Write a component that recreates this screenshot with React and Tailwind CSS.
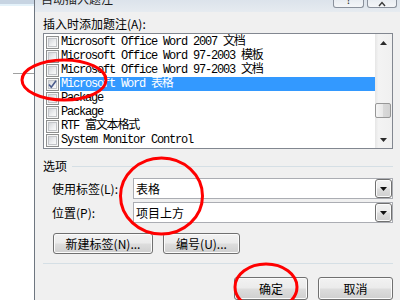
import React from 'react'

const items = [
  { label: 'Microsoft Office Word 2007 文档' },
  { label: 'Microsoft Office Word 97-2003 模板' },
  { label: 'Microsoft Office Word 97-2003 文档' },
  { label: 'Microsoft Word 表格', checked: true, selected: true },
  { label: 'Package' },
  { label: 'Package' },
  { label: 'RTF 富文本格式' },
  { label: 'System Monitor Control' },
]

const btn =
  'flex items-center justify-center rounded-[3px] border border-[#707070] bg-[linear-gradient(#f2f2f2_0%,#ebebeb_48%,#dddddd_52%,#cfcfcf_100%)] shadow-[inset_0_0_0_1px_#fbfbfb] text-[12px] leading-[14px] text-black'

function CheckBox({ checked }) {
  return (
    <div className="relative w-[13px] h-[13px] shrink-0 border border-[#8e8f8f] bg-[#f6f6f6] p-[1px]">
      <div className="w-full h-full border border-[#c3c5c9] bg-[linear-gradient(135deg,#d3d5d9,#eeeff1_60%,#fafafa)]" />
      {checked && (
        <svg className="absolute inset-0" width="11" height="11" viewBox="0 0 11 11">
          <polyline points="2,5.5 4.3,8.3 9,1.8" fill="none" stroke="#4b5b8c" strokeWidth="1.6" />
        </svg>
      )}
    </div>
  )
}

function Arrow({ up }) {
  return (
    <svg width="7" height="4" viewBox="0 0 7 4">
      <polygon points={up ? '3.5,0 7,4 0,4' : '0,0 7,0 3.5,4'} fill="#2b2b2b" />
    </svg>
  )
}

function Combo({ value }) {
  return (
    <div className="flex-1 h-[21px] flex border border-[#abadb3] bg-white">
      <div className="flex-1 pl-[2px] flex items-center text-[12px] leading-[14px] text-black">{value}</div>
      <div className={`w-[17px] h-full rounded-[2px] ${btn}`}>
        <svg width="7" height="4" viewBox="0 0 7 4">
          <polygon points="0,0 7,0 3.5,4" fill="#111" />
        </svg>
      </div>
    </div>
  )
}

export default function App() {
  return (
    <div className="relative w-[400px] h-[300px] overflow-hidden bg-white flex font-['Noto_Sans_CJK_SC','Liberation_Sans',sans-serif]">
      {/* window behind the dialog */}
      <div className="w-[34px] shrink-0 flex flex-col">
        <div className="h-[4px] bg-[#c7d4e2]" />
        <div className="h-[2px] bg-[#e4f2fa]" />
        <div className="h-[67px]" />
        <div className="h-px ml-[13px] bg-[#a0a0a0]" />
      </div>

      {/* dialog */}
      <div className="flex-1 flex flex-col border-l border-[#6e7680] bg-[#f0f0f0]">
        <div className="h-[12px] shrink-0 flex bg-[linear-gradient(#dce3eb,#e6ebf0)] overflow-hidden">
          <div className="flex-1 pl-[6px] -mt-[8px] text-[12px] leading-[14px] text-[#1e1e1e]">自动插入题注</div>
          <div className="flex gap-[3px] pr-[3px] h-[8px]">
            <div className="w-[31px] h-[8px] border border-t-0 border-[#8a919c] rounded-b-[3px] bg-[linear-gradient(#e9edf2,#f4f6f8)] flex justify-center overflow-hidden">
              <span className="-mt-[7px] text-[11px] leading-[12px] text-[#333]">?</span>
            </div>
            <div className="w-[30px] h-[8px] border border-t-0 border-[#8a919c] rounded-b-[3px] bg-[linear-gradient(#e9edf2,#f4f6f8)] flex justify-center">
              <svg width="12" height="7" viewBox="0 0 12 7">
                <path d="M3 6 L6 2.5 L9 6" fill="none" stroke="#3a3a3a" strokeWidth="1.4" />
              </svg>
            </div>
          </div>
        </div>

        <div className="flex-1 flex flex-col pl-[8px] pr-[7px] pt-[5px] text-black">
          <div className="h-[14px] text-[12px] leading-[14px]">插入时添加题注(A):</div>

          <div className="mt-[2px] h-[116px] flex border border-[#828790] bg-white">
            <div className="flex-1 pt-[1px] flex flex-col font-['Liberation_Mono','Noto_Sans_CJK_SC',monospace] text-[12px] tracking-[-1.2px]">
              {items.map((it, i) => (
                <div key={i} className="h-[14px] flex items-center pl-[2px]">
                  <CheckBox checked={it.checked} />
                  <div
                    className={`ml-[1px] flex-1 h-[14px] pl-[1px] leading-[14px] whitespace-nowrap ${
                      it.selected ? 'bg-[#3399ff] text-white' : 'text-black'
                    }`}
                  >
                    {it.label}
                  </div>
                </div>
              ))}
            </div>
            <div className="w-[17px] flex flex-col bg-[linear-gradient(90deg,#e6e6e6,#f3f3f3_20%,#f0f0f0)]">
              <div className="h-[17px] flex items-center justify-center">
                <Arrow up />
              </div>
              <div className="flex-1">
                <div className="mt-[52px] mr-[1px] h-[15px] rounded-[2px] border border-[#979797] bg-[linear-gradient(90deg,#f5f5f5,#e8e8e8_50%,#d9d9d9_50%,#d2d2d2)]" />
              </div>
              <div className="h-[17px] flex items-center justify-center">
                <Arrow />
              </div>
            </div>
          </div>

          <div className="mt-[10px] h-[14px] flex items-center">
            <span className="text-[12px] leading-[14px]">选项</span>
            <div className="ml-[5px] flex-1 h-px bg-[#d5dfe5]" />
          </div>

          <div className="mt-[5px] flex items-center">
            <span className="w-[81px] ml-[9px] text-[12px] leading-[14px]">使用标签(L):</span>
            <Combo value="表格" />
          </div>
          <div className="mt-[3px] flex items-center">
            <span className="w-[81px] ml-[9px] text-[12px] leading-[14px]">位置(P):</span>
            <Combo value="项目上方" />
          </div>

          <div className="mt-[10px] ml-[10px] flex gap-[10px]">
            <div className={`w-[100px] h-[21px] ${btn}`}>新建标签(N)...</div>
            <div className={`w-[77px] h-[21px] ${btn}`}>编号(U)...</div>
          </div>

          <div className="mt-[9px] h-px bg-[#d5dfe5]" />

          <div className="mt-[13px] flex justify-end gap-[10px]">
            <div className={`w-[74px] h-[23px] ${btn}`}>确定</div>
            <div className={`w-[75px] h-[23px] ${btn}`}>取消</div>
          </div>
        </div>
      </div>

      {/* red annotation circles */}
      <svg className="absolute inset-0 pointer-events-none" width="400" height="300" viewBox="0 0 400 300">
        <ellipse cx="64" cy="80" rx="42" ry="20" fill="none" stroke="#ff0000" strokeWidth="3" />
        <ellipse cx="161.5" cy="196" rx="41" ry="38" fill="none" stroke="#ff0000" strokeWidth="3" />
        <ellipse cx="266" cy="287" rx="31" ry="23" fill="none" stroke="#ff0000" strokeWidth="3" />
      </svg>
    </div>
  )
}
